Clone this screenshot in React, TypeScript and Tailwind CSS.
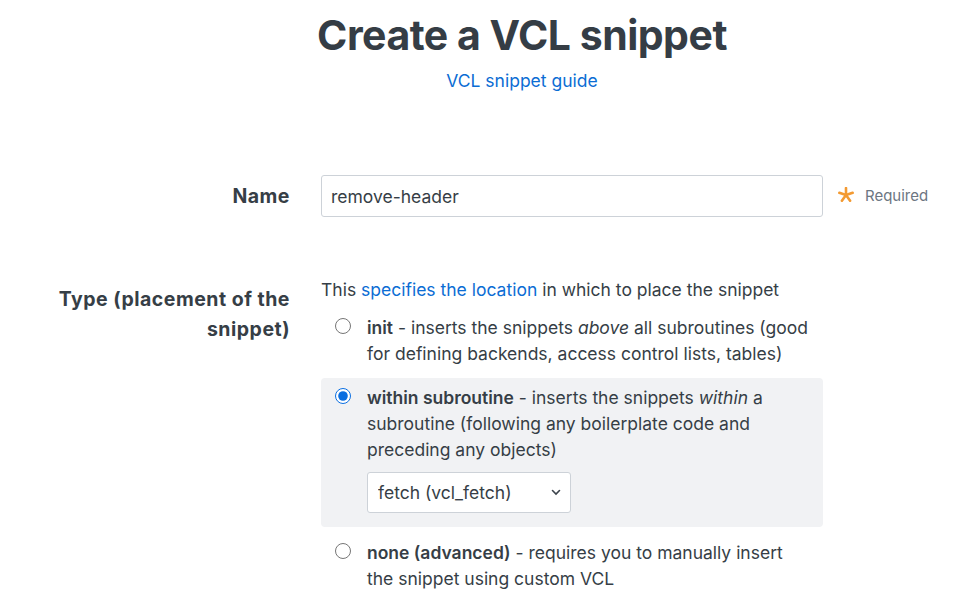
import { useState } from "react";

const options = [
  {
    id: "init",
    title: "init",
    before: " - inserts the snippets ",
    em: "above",
    after: " all subroutines (good for defining backends, access control lists, tables)",
  },
  {
    id: "within",
    title: "within subroutine",
    before: " - inserts the snippets ",
    em: "within",
    after: " a subroutine (following any boilerplate code and preceding any objects)",
  },
  {
    id: "none",
    title: "none (advanced)",
    before: " - requires you to manually insert the snippet using custom VCL",
    em: "",
    after: "",
  },
];

const Asterisk = () => (
  <svg width="16" height="15" viewBox="-8 -8 16 15" className="translate-y-[-2px]">
    {[-90, -18, 54, 126, 198].map((a) => {
      const r = (a * Math.PI) / 180;
      return (
        <line
          key={a}
          x1="0"
          y1="0"
          x2={(7 * Math.cos(r)).toFixed(2)}
          y2={(7 * Math.sin(r)).toFixed(2)}
          stroke="#f39a32"
          strokeWidth="2.6"
          strokeLinecap="round"
        />
      );
    })}
  </svg>
);

const App = () => {
  const [name, setName] = useState("remove-header");
  const [type, setType] = useState("within");
  const [sub, setSub] = useState("fetch");

  return (
    <div className="min-h-screen bg-white text-[#363e46] font-['Inter','Liberation_Sans',sans-serif]">
      <div className="pt-[11px] text-center pl-[70px]">
        <h1 className="text-[41px] leading-[48px] font-bold tracking-[-0.5px] text-[#353d45]">
          Create a VCL snippet
        </h1>
        <a href="#" className="mt-[9px] inline-block text-[17.5px] leading-[26px] text-[#0b6dd4]">
          VCL snippet guide
        </a>
      </div>

      <div className="mt-[81px] flex items-center">
        <label className="w-[290px] text-right text-[19.5px] leading-[30px] font-bold tracking-[0.5px]">
          Name
        </label>
        <input
          value={name}
          onChange={(e) => setName(e.target.value)}
          className="ml-[31px] w-[502px] h-[42px] border border-[#cdd2d8] rounded-[3px] px-[9px] text-[17.5px] text-[#363e46] outline-none"
        />
        <span className="ml-[15px] flex items-center gap-[11px]">
          <Asterisk />
          <span className="text-[15px] text-[#6c7682]">Required</span>
        </span>
      </div>

      <div className="mt-[60px] flex">
        <label className="w-[290px] pt-[7px] text-right text-[19.5px] leading-[30px] font-bold tracking-[0.5px]">
          Type (placement of the
          <br />
          snippet)
        </label>
        <div className="ml-[31px] w-[502px] text-[17.5px] leading-[26px]">
          <p>
            This <a href="#" className="text-[#0b6dd4]">specifies the location</a> in which to place the snippet
          </p>
          <div className="mt-[12px] flex flex-col">
            {options.map((o) => {
              const active = type === o.id;
              return (
                <div
                  key={o.id}
                  className={
                    active
                      ? "mt-[11px] mb-[13px] flex gap-[16px] rounded-[4px] bg-[#f1f2f4] px-[14px] pt-[7px] pb-[14px]"
                      : "flex gap-[16px] px-[14px]"
                  }
                >
                  <input
                    type="radio"
                    name="type"
                    checked={active}
                    onChange={() => setType(o.id)}
                    className="mt-[3px] h-[16px] w-[16px] shrink-0 accent-[#0a6ee0]"
                  />
                  <div>
                    <p>
                      <b className="font-semibold">{o.title}</b>
                      {o.before}
                      {o.em && <i>{o.em}</i>}
                      {o.after}
                    </p>
                    {active && (
                      <div className="relative mt-[9px] w-[204px]">
                        <select
                          value={sub}
                          onChange={(e) => setSub(e.target.value)}
                          className="h-[41px] w-full appearance-none rounded-[3px] border border-[#cdd2d8] bg-white pl-[10px] pr-[30px] text-[17.5px] text-[#363e46] outline-none"
                        >
                          <option value="recv">recv (vcl_recv)</option>
                          <option value="fetch">fetch (vcl_fetch)</option>
                          <option value="deliver">deliver (vcl_deliver)</option>
                        </select>
                        <svg
                          className="pointer-events-none absolute right-[10px] top-[17px]"
                          width="10"
                          height="7"
                          viewBox="0 0 10 7"
                          fill="none"
                        >
                          <path d="M1.5 1.5 5 5l3.5-3.5" stroke="#3b434b" strokeWidth="1.6" strokeLinecap="round" />
                        </svg>
                      </div>
                    )}
                  </div>
                </div>
              );
            })}
          </div>
        </div>
      </div>
    </div>
  );
};

export default App;
